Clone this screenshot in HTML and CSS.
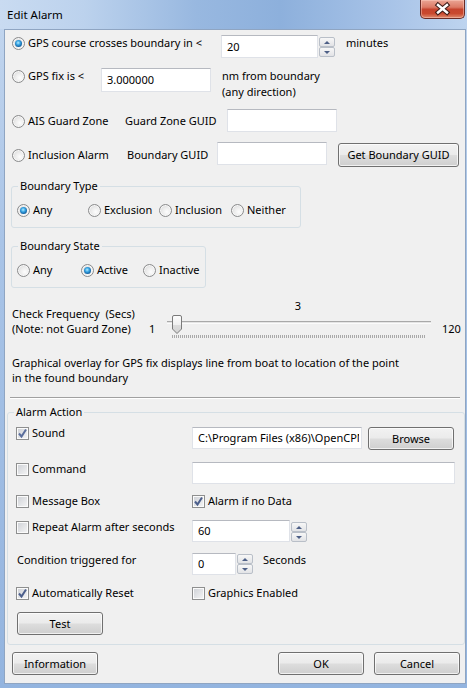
FILE: index.html
```html
<!DOCTYPE html>
<html lang="en">
<head>
<meta charset="utf-8">
<title>Edit Alarm</title>
<link rel="stylesheet" href="styles.css">
</head>
<body>
<div class="window">
  <div class="titlebar">
    <div class="title">Edit Alarm</div>
    <div class="close">
      <svg width="43" height="18" viewBox="0 0 43 18"><path d="M17 5 L26 12.5 M26 5 L17 12.5" stroke="#3e1d1a" stroke-width="4.6" stroke-linecap="square" fill="none"/><path d="M17 5 L26 12.5 M26 5 L17 12.5" stroke="#ffffff" stroke-width="2.4" stroke-linecap="square" fill="none"/></svg>
    </div>
  </div>
  <div class="client">
    <div class="row r1">
      <div class="opt o-r1"><span class="radio on"></span><span>GPS course crosses boundary in &lt;</span></div>
      <div class="spin">
        <div class="tb tb-course">20</div>
        <div class="arrows"><span class="arr up"></span><span class="arr dn"></span></div>
      </div>
      <span class="unit-min">minutes</span>
    </div>
    <div class="row r2">
      <div class="opt o-r2"><span class="radio"></span><span>GPS fix is &lt;</span></div>
      <div class="tb tb-fix">3.000000</div>
      <div class="nm">nm from boundary<br>(any direction)</div>
    </div>
    <div class="row r3">
      <div class="opt o-r3"><span class="radio"></span><span>AIS Guard Zone</span></div>
      <span class="lbl l-gz">Guard Zone GUID</span>
      <div class="tb tb-guid"></div>
    </div>
    <div class="row r4">
      <div class="opt o-r4"><span class="radio"></span><span>Inclusion Alarm</span></div>
      <span class="lbl l-bg">Boundary GUID</span>
      <div class="tb tb-guid"></div>
      <div class="btn btn-guid">Get Boundary GUID</div>
    </div>

    <fieldset class="group g-type">
      <legend>Boundary Type</legend>
      <div class="radios">
        <div class="opt t1"><span class="radio on"></span><span>Any</span></div>
        <div class="opt t2"><span class="radio"></span><span>Exclusion</span></div>
        <div class="opt t3"><span class="radio"></span><span>Inclusion</span></div>
        <div class="opt"><span class="radio"></span><span>Neither</span></div>
      </div>
    </fieldset>

    <fieldset class="group g-state">
      <legend>Boundary State</legend>
      <div class="radios">
        <div class="opt s1"><span class="radio"></span><span>Any</span></div>
        <div class="opt s2"><span class="radio on"></span><span>Active</span></div>
        <div class="opt"><span class="radio"></span><span>Inactive</span></div>
      </div>
    </fieldset>

    <div class="row freq">
      <div class="freq-label">Check Frequency&nbsp; (Secs)<br>(Note: not Guard Zone)</div>
      <div class="freq-min">1</div>
      <div class="slider">
        <div class="slider-val">3</div>
        <div class="slider-body">
          <div class="track"></div>
          <div class="thumb"><svg width="10" height="19" viewBox="0 0 10 19"><defs><linearGradient id="tg" x1="0" y1="0" x2="0" y2="1"><stop offset="0" stop-color="#fdfdfd"/><stop offset="0.5" stop-color="#f0f0f0"/><stop offset="0.55" stop-color="#dcdcdc"/><stop offset="1" stop-color="#d2d2d2"/></linearGradient></defs><path d="M0.5 2 Q0.5 0.5 2 0.5 H8 Q9.5 0.5 9.5 2 V14 L5 18.5 L0.5 14 Z" fill="url(#tg)" stroke="#7a7a7a"/></svg></div>
          <div class="ticks"></div>
        </div>
      </div>
      <div class="freq-max">120</div>
    </div>

    <div class="note">Graphical overlay for GPS fix displays line from boat to location of the point<br>in the found boundary</div>

    <div class="sep"></div>

    <fieldset class="group g-action">
      <legend>Alarm Action</legend>
      <div class="row a-sound">
        <div class="opt c-first"><span class="chk on"><svg width="11" height="11" viewBox="0 0 11 11"><path d="M2 5.5 L4.5 8.5 L9 1.5" stroke="#5a6e9c" stroke-width="2" fill="none"/></svg></span><span>Sound</span></div>
        <div class="tb tb-sound"><span class="clip">C:\Program Files (x86)\OpenCPN</span></div>
        <div class="btn btn-browse">Browse</div>
      </div>
      <div class="row a-cmd">
        <div class="opt c-first"><span class="chk"></span><span>Command</span></div>
        <div class="tb tb-cmd"></div>
      </div>
      <div class="row a-msg">
        <div class="opt c-first"><span class="chk"></span><span>Message Box</span></div>
        <div class="opt"><span class="chk on"><svg width="11" height="11" viewBox="0 0 11 11"><path d="M2 5.5 L4.5 8.5 L9 1.5" stroke="#4c5f8c" stroke-width="2" fill="none"/></svg></span><span>Alarm if no Data</span></div>
      </div>
      <div class="row a-rep">
        <div class="opt c-first"><span class="chk"></span><span>Repeat Alarm after seconds</span></div>
        <div class="spin">
          <div class="tb tb-rep">60</div>
          <div class="arrows a-low"><span class="arr up"></span><span class="arr dn"></span></div>
        </div>
      </div>
      <div class="row a-cond">
        <div class="lbl c-cond">Condition triggered for</div>
        <div class="spin">
          <div class="tb tb-cond">0</div>
          <div class="arrows a-tight"><span class="arr up"></span><span class="arr dn"></span></div>
        </div>
        <span class="unit-sec">Seconds</span>
      </div>
      <div class="row a-reset">
        <div class="opt c-first"><span class="chk on"><svg width="11" height="11" viewBox="0 0 11 11"><path d="M2 5.5 L4.5 8.5 L9 1.5" stroke="#4c5f8c" stroke-width="2" fill="none"/></svg></span><span>Automatically Reset</span></div>
        <div class="opt"><span class="chk"></span><span>Graphics Enabled</span></div>
      </div>
      <div class="btn btn-test">Test</div>
    </fieldset>

    <div class="row footer">
      <div class="btn">Information</div>
      <div class="btn btn-ok">OK</div>
      <div class="btn btn-cancel">Cancel</div>
    </div>
  </div>
</div>
</body>
</html>
```

FILE: styles.css
```css
* { box-sizing: border-box; }
html, body { margin: 0; padding: 0; }
body {
  width: 467px; height: 688px; overflow: hidden;
  font-family: "Noto Sans", "Open Sans", sans-serif;
  font-size: 11px; line-height: 16px; color: #000;
  background: linear-gradient(to bottom, #c4d7ef 0%, #a9c4e7 35%, #93b4df 100%);
}
.window { display: flex; flex-direction: column; height: 688px; }
.titlebar {
  flex: none; height: 29px; display: flex; justify-content: space-between; align-items: flex-start;
  background: linear-gradient(to right, #c9dbf1 0%, #bcd2ed 18%, #98b8e0 42%, #8db0dc 60%, #a6c2e7 82%, #bed4ef 100%);
}
.title { margin: 7px 0 0 7px; font-size: 11.5px; }
.close {
  width: 45px; height: 19px; margin-right: 2px;
  border: 1px solid #6a2c27; border-top: none; border-radius: 0 0 5px 5px;
  background: linear-gradient(#eaa595 0%, #dc7a66 40%, #c6442e 52%, #c9492f 75%, #df8a6e 100%);
  box-shadow: inset 0 0 0 1px rgba(255,210,200,.45);
}
.close svg { display: block; }
.client {
  flex: 1; margin: 0 1px 4px 4px; border: 1px solid #8fa5c2;
  background: #f0f0f0; display: flex; flex-direction: column;
}
.row { display: flex; align-items: flex-start; flex: none; }
.opt { display: flex; align-items: center; gap: 3px; white-space: nowrap; flex: none; height: 16px; }
.lbl { white-space: nowrap; flex: none; }

.radio {
  width: 13px; height: 13px; border-radius: 50%; flex: none;
  border: 1px solid #8a8b8c;
  background: radial-gradient(circle at 62% 62%, #fdfdfd 0%, #ececec 45%, #cfcfcf 100%);
  box-shadow: inset 0 0 0 1px #f7f7f7;
  display: flex; align-items: center; justify-content: center;
}
.radio.on::after {
  content: ""; width: 7px; height: 7px; border-radius: 50%;
  background: radial-gradient(circle at 45% 40%, #b4ecff 0%, #3aa6e4 35%, #0f5e9f 72%, #17395f 100%);
}
.chk {
  width: 13px; height: 13px; flex: none; border: 1px solid #8e8f8f;
  background: linear-gradient(135deg, #cdd0d5 0%, #f6f6f6 100%);
  box-shadow: inset 0 0 0 1px #fbfbfb;
  display: flex; align-items: center; justify-content: center;
}
.chk svg { display: block; }

.tb {
  background: #fff; border: 1px solid #dfe2e8; border-top-color: #b6b9c0;
  display: flex; align-items: center; padding: 0 2px 0 5px;
  white-space: nowrap; overflow: hidden; flex: none;
}
.clip { flex: 1; min-width: 0; overflow: hidden; }
.spin { display: flex; gap: 1px; flex: none; }
.arrows { display: flex; flex-direction: column; margin-top: 2px; flex: none; }
.arr {
  width: 16px; height: 10px; border: 1px solid #b9bfc8; border-radius: 2px;
  background: linear-gradient(#f7f7f7, #e2e3e6);
  display: flex; align-items: center; justify-content: center;
}
.arr.up::after { content: ""; border-left: 3px solid transparent; border-right: 3px solid transparent; border-bottom: 3px solid #4d5f86; }
.arr.dn::after { content: ""; border-left: 3px solid transparent; border-right: 3px solid transparent; border-top: 3px solid #4d5f86; }

.btn {
  flex: none; width: 86px; height: 23px; border: 1px solid #707070; border-radius: 3px;
  background: linear-gradient(#f2f2f2 0%, #ebebeb 48%, #dddddd 52%, #cfcfcf 100%);
  box-shadow: inset 0 0 0 1px rgba(255,255,255,.7);
  display: flex; align-items: center; justify-content: center; white-space: nowrap;
}

/* top option rows */
.r1 { margin: 5px 0 0 7px; height: 23px; }
.o-r1 { width: 209px; }
.tb-course { width: 97px; height: 23px; }
.unit-min { margin-left: 11px; }

.r2 { margin: 10px 0 0 7px; }
.o-r2 { width: 89px; }
.tb-fix { width: 110px; height: 24px; }
.nm { margin-left: 11px; }

.r3 { margin: 9px 0 0 7px; height: 23px; }
.o-r3 { width: 113px; margin-top: 4px; }
.l-gz { width: 102px; margin-top: 4px; }
.tb-guid { width: 110px; height: 23px; }

.r4 { margin: 10px 0 0 7px; height: 25px; }
.o-r4 { width: 115px; margin-top: 5px; }
.l-bg { width: 90px; margin-top: 5px; }
.btn-guid { width: 121px; height: 24px; margin: 1px 0 0 11px; }

/* group boxes */
.group {
  margin: 0; padding: 8px 0 9px 0; min-width: 0; flex: none;
  border: 1px solid #d5dfe5; border-radius: 3px;
}
.group legend { margin-left: 6px; padding: 0 2px; line-height: 16px; }
.radios { display: flex; padding-left: 5px; }
.g-type { margin: 11px 0 0 6px; width: 290px; }
.t1, .t2 { width: 71px; }
.t3 { width: 72px; }
.g-state { margin: 10px 0 0 6px; width: 195px; }
.s1 { width: 64px; }
.s2 { width: 62px; }

/* frequency slider */
.freq { margin: 10px 0 0 7px; }
.freq-label { width: 135px; margin-top: 8px; line-height: 15px; white-space: nowrap; }
.freq-min { width: 20px; padding-left: 2px; margin-top: 23px; }
.slider { width: 264px; display: flex; flex-direction: column; }
.slider-val { text-align: center; padding-right: 2px; }
.slider-body { display: grid; height: 26px; }
.slider-body > * { grid-area: 1 / 1; align-self: start; justify-self: start; }
.track {
  margin-top: 7px; width: 264px; height: 3px;
  border-top: 1px solid #a9a9a9; border-bottom: 1px solid #fbfbfb; background: #e4e4e4;
}
.thumb { margin: 1px 0 0 5px; width: 10px; height: 19px; }
.thumb svg { display: block; }
.ticks {
  margin: 21px 0 0 5px; width: 254px; height: 3px;
  background: repeating-linear-gradient(to right, #a9a9a9 0 1px, transparent 1px 2px);
}
.freq-max { margin: 23px 0 0 11px; }

.note { margin: 15px 0 0 7px; line-height: 15px; white-space: nowrap; flex: none; }
.sep { margin: 12px 0 0 5px; width: 450px; height: 2px; border-top: 1px solid #a0a0a0; border-bottom: 1px solid #ffffff; flex: none; }

/* alarm action */
.g-action { margin: 5px 0 0 2px; width: 458px; padding: 5px 0 9px 0; }
.g-action .row { margin-left: 8px; }
.c-first { width: 176px; }
.a-sound { height: 25px; }
.tb-sound { width: 170px; height: 22px; margin-top: 2px; }
.btn-browse { margin: 2px 0 0 6px; }
.a-cmd { margin-top: 11px; height: 23px; }
.tb-cmd { width: 263px; height: 22px; margin-top: 1px; }
.a-msg { margin-top: 9px; }
.a-rep { margin-top: 10px; height: 23px; }
.a-rep .spin, .a-cond .spin { margin-top: 1px; }
.tb-rep { width: 98px; height: 22px; }
.a-low { margin-top: 2px; }
.a-cond { margin-top: 10px; height: 23px; }
.c-cond { width: 176px; padding-left: 1px; }
.tb-cond { width: 44px; height: 22px; }
.a-tight { margin-top: 1px; }
.unit-sec { margin-left: 10px; }
.a-reset { margin-top: 10px; }
.btn-test { margin: 11px 0 0 9px; }

.footer { margin: 7px 5px 0 7px; }
.btn-ok { margin-left: auto; }
.btn-cancel { margin-left: 10px; }
```
